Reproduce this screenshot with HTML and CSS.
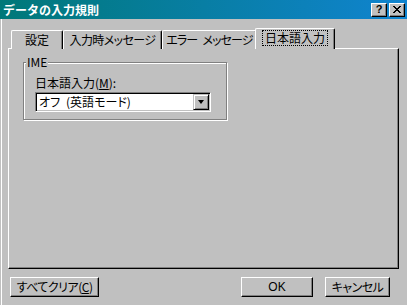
FILE: index.html
```html
<!DOCTYPE html>
<html lang="ja">
<head>
<meta charset="utf-8">
<title>データの入力規則</title>
<link rel="stylesheet" href="styles.css">
</head>
<body>
<div class="window">
  <div class="titlebar">
    <span class="title">データの入力規則</span>
    <div class="tbtns">
      <div class="tbtn help">?</div>
      <div class="tbtn close">
        <svg width="8" height="7" viewBox="0 0 8 7"><path d="M0 0h2v1h-2zM6 0h2v1h-2zM1 1h2v1h-2zM5 1h2v1h-2zM2 2h4v1h-4zM3 3h2v1h-2zM2 4h4v1h-4zM1 5h2v1h-2zM5 5h2v1h-2zM0 6h2v1h-2zM6 6h2v1h-2z" fill="#000"/></svg>
      </div>
    </div>
  </div>
  <div class="content">
    <div class="tabs">
      <div class="tab t1">設定</div>
      <div class="tab t2">入力時メッセージ</div>
      <div class="tab t3">エラー&ensp;メッセージ</div>
      <div class="tab sel"><span class="focus">日本語入力</span></div>
    </div>
    <div class="panel">
      <div class="group">
        <span class="legend">IME</span>
        <div class="label">日本語入力(<u>M</u>):</div>
        <div class="combo">
          <span class="ctext">オフ&ensp;(英語モード)</span>
          <div class="cbtn"><span class="arrow"></span></div>
        </div>
      </div>
    </div>
    <div class="buttons">
      <div class="btn clear">すべてクリア(<u>C</u>)</div>
      <div class="spacer"></div>
      <div class="btn ok">OK</div>
      <div class="btn cancel">キャンセル</div>
    </div>
  </div>
</div>
</body>
</html>
```

FILE: styles.css
```css
* { box-sizing: border-box; }
html, body { margin: 0; padding: 0; background: #c0c0c0; }
body {
  font-family: "Noto Sans CJK JP", "Noto Sans", sans-serif;
  font-size: 12px;
  font-feature-settings: "palt";
  color: #000;
  white-space: nowrap;
}
.window {
  width: 407px;
  height: 305px;
  background: #c0c0c0;
  overflow: hidden;
  display: flex;
  flex-direction: column;
}
.titlebar {
  height: 19px;
  flex: none;
  background: linear-gradient(to right, #007878, #1084d0);
  display: flex;
  align-items: center;
  justify-content: space-between;
  padding: 0 2px 0 3px;
}
.title {
  color: #fff;
  font-weight: bold;
  font-size: 12px;
  line-height: 14px;
  font-feature-settings: normal;
}
.tbtns { display: flex; gap: 2px; }
.tbtn {
  width: 16px;
  height: 14px;
  background: #c0c0c0;
  border: 1px solid;
  border-color: #fff #000 #000 #fff;
  box-shadow: inset -1px -1px #808080;
  display: flex;
  align-items: center;
  justify-content: center;
}
.help {
  font-family: "Liberation Sans", Arial, sans-serif;
  font-weight: bold;
  font-size: 11px;
  line-height: 11px;
}
.content {
  flex: 1;
  display: flex;
  flex-direction: column;
  border-left: 1px solid #c0c0c0;
  box-shadow: inset 1px 0 #fff;
}
.tabs {
  display: flex;
  align-items: flex-end;
  height: 21px;
  margin: 9px 0 -1px 10px;
  position: relative;
  z-index: 1;
}
.tab {
  flex: none;
  height: 19px;
  background: #c0c0c0;
  border-top: 1px solid #fff;
  border-left: 1px solid #fff;
  border-right: 1px solid #000;
  box-shadow: inset -1px 0 #808080;
  border-radius: 2px 2px 0 0;
  display: flex;
  align-items: center;
  justify-content: center;
  line-height: 14px;
  padding-bottom: 1px;
}
.t1 { width: 52px; }
.t2 { width: 99px; letter-spacing: -0.6px; }
.t3 { width: 95px; letter-spacing: -0.9px; }
.sel {
  width: 80px;
  height: 21px;
  margin-left: -2px;
  padding-bottom: 2px;
  font-feature-settings: normal;
}
.focus {
  outline: 1px dotted #000;
  outline-offset: 0;
  padding: 0 2px;
  height: 14px;
}
.panel {
  margin-left: 7px;
  width: 391px;
  height: 221px;
  flex: none;
  border: 1px solid;
  border-color: #fff #000 #000 #fff;
  box-shadow: inset -1px -1px #808080;
  padding: 13px 0 0 14px;
}
.group {
  position: relative;
  width: 204px;
  height: 58px;
  border: 1px solid #808080;
  box-shadow: inset 1px 1px #fff, 1px 1px #fff;
  padding: 13px 0 0 11px;
}
.legend {
  position: absolute;
  top: -8px;
  left: 2px;
  padding: 0 1px;
  background: #c0c0c0;
  line-height: 14px;
}
.label {
  line-height: 14px;
  height: 16px;
}
.label u, .btn u { text-decoration: underline; text-underline-offset: 1px; }
.combo {
  width: 176px;
  height: 20px;
  background: #fff;
  border: 1px solid;
  border-color: #808080 #fff #fff #808080;
  box-shadow: inset 1px 1px #000, inset -1px -1px #c0c0c0;
  display: flex;
  align-items: center;
  justify-content: space-between;
  padding: 1px;
}
.ctext {
  line-height: 14px;
  padding-left: 2px;
}
.cbtn {
  width: 16px;
  height: 16px;
  background: #c0c0c0;
  border: 1px solid;
  border-color: #c0c0c0 #000 #000 #c0c0c0;
  box-shadow: inset 1px 1px #fff, inset -1px -1px #808080;
  display: flex;
  align-items: center;
  justify-content: center;
}
.arrow {
  width: 0;
  height: 0;
  border-left: 3.5px solid transparent;
  border-right: 3.5px solid transparent;
  border-top: 4px solid #000;
}
.buttons {
  display: flex;
  margin: 8px 17px 0 9px;
  height: 20px;
}
.spacer { flex: 1; }
.btn {
  flex: none;
  height: 20px;
  background: #c0c0c0;
  border: 1px solid;
  border-color: #fff #000 #000 #fff;
  box-shadow: inset -1px -1px #808080;
  display: flex;
  align-items: center;
  justify-content: center;
  line-height: 14px;
}
.clear { width: 89px; letter-spacing: -0.5px; }
.ok { width: 72px; font-family: "Liberation Sans", Arial, sans-serif; }
.cancel { width: 65px; margin-left: 12px; letter-spacing: -0.5px; }
```
